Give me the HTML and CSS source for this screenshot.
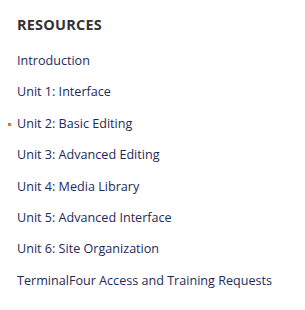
FILE: index.html
```html
<!DOCTYPE html>
<html lang="en">
<head>
    <meta charset="UTF-8">
    <meta name="viewport" content="width=device-width, initial-scale=1.0">
    <title>Resources</title>
    <link rel="stylesheet" href="styles.css">
</head>
<body>
    <nav class="sidebar">
        <h2 class="sidebar-title">RESOURCES</h2>
        <ul class="sidebar-list">
            <li><a href="#">Introduction</a></li>
            <li><a href="#">Unit 1: Interface</a></li>
            <li class="current"><a href="#">Unit 2: Basic Editing</a></li>
            <li><a href="#">Unit 3: Advanced Editing</a></li>
            <li><a href="#">Unit 4: Media Library</a></li>
            <li><a href="#">Unit 5: Advanced Interface</a></li>
            <li><a href="#">Unit 6: Site Organization</a></li>
            <li><a href="#">TerminalFour Access and Training Requests</a></li>
        </ul>
    </nav>
</body>
</html>
```

FILE: styles.css
```css
body {
    margin: 0;
    background: #fff;
    font-family: "Open Sans", Arial, sans-serif;
}
.sidebar {
    padding: 15px 17px;
}
.sidebar-title {
    margin: 0 0 10px;
    font-size: 14.5px;
    font-weight: 700;
    color: #333;
    letter-spacing: 0.2px;
    line-height: 20px;
}
.sidebar-list {
    list-style: none;
    margin: 0;
    padding: 0;
}
.sidebar-list li {
    position: relative;
    padding: 6px 0;
    line-height: 19.4px;
    font-size: 12.6px;
}
.sidebar-list a {
    color: #1d2a5b;
    text-decoration: none;
}
.sidebar-list li.current::before {
    content: "";
    position: absolute;
    left: -9px;
    top: 15px;
    width: 3px;
    height: 3px;
    background: #e87722;
}
```
